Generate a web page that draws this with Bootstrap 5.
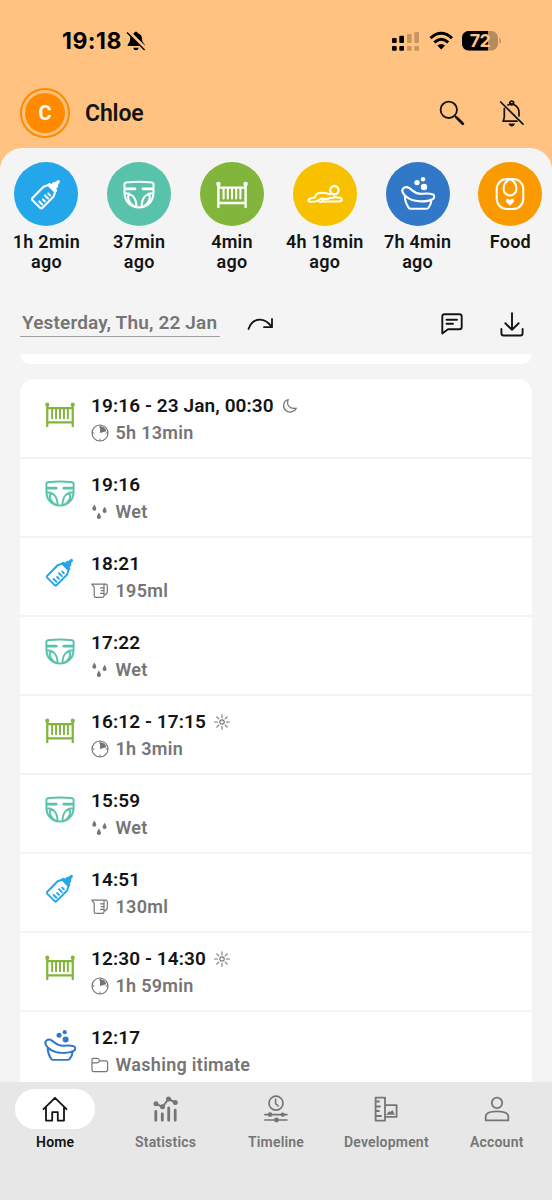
<!DOCTYPE html>
<html lang="en">
<head>
<meta charset="utf-8">
<meta name="viewport" content="width=device-width, initial-scale=1">
<title>Chloe</title>
<link href="https://cdn.jsdelivr.net/npm/bootstrap@5.3.0/dist/css/bootstrap.min.css" rel="stylesheet">
<style>
body{font-family:Roboto,sans-serif;background:#ffc280;color:#141414;-webkit-font-smoothing:antialiased}
svg{display:block;flex:none}
svg,symbol{overflow:visible}
.ln{fill:none;stroke:currentColor;stroke-linecap:round;stroke-linejoin:round}
.fl{fill:currentColor;stroke:none}
.phone{width:552px;height:1200px}
.statusbar{height:82px;padding:0 51px 0 62px;color:#000}
.clock{font:700 23px/26px Inter,sans-serif;letter-spacing:.5px}
.person{height:66px;padding:0 27px 4px 20px}
.avatar{width:50px;height:50px;border:2px solid #ff8a00;border-radius:50%;padding:3px}
.avatar span{background:#ff8a00;color:#fff;border-radius:50%;font-weight:700;font-size:20px}
.pname{font-size:23px;font-weight:600;margin-left:15px;padding-top:3px;letter-spacing:-.15px}
.sheet{background:#f4f4f4;border-radius:22px 22px 0 0;min-height:0}
.shortcuts{padding-top:14px;height:130px;width:557px}
.shortcut{width:92.8px;font-weight:600;font-size:18px;line-height:20px;letter-spacing:.25px}
.disc{width:64px;height:64px;border-radius:50%;color:#fff;margin-bottom:6px}
.datebar{height:76px;padding:26px 28px 0 20px}
.date{width:200px;height:33px;border-bottom:1.5px solid #a0a0a0;color:#757575;font-size:19px;font-weight:600;line-height:37px;padding-left:2px;letter-spacing:.15px;white-space:nowrap}
.feed{padding:0 20px;min-height:0}
.stub{height:10px;background:#fff;border-radius:0 0 12px 12px;margin-bottom:15px}
.log{border-radius:14px 14px 0 0;background:#fff;padding-top:1px}
.entry{height:79px;border-bottom:2px solid #f4f4f4;padding:14px 0 0 25px}
.entry>svg{margin-top:5px}
.entry-text{margin-left:16px}
.when{font-size:19px;font-weight:600;line-height:24px;gap:8px;letter-spacing:.1px}
.what{font-size:18px;font-weight:600;line-height:24px;color:#757575;gap:6.5px;margin-top:3px;letter-spacing:.3px}
.tabs{height:118px;background:#e7e7e7;padding-top:7px}
.tab{width:20%;color:#757575;font-size:14px;font-weight:600;line-height:18px;letter-spacing:.2px}
.pill{width:80px;height:40px;border-radius:20px;margin-bottom:4px}
.tab.on{color:#141414}.tab.on .pill{background:#fff}
.blue{color:#24a7ea}.mint{color:#59c2aa}.green{color:#82b53b}.navy{color:#3178c9}
</style>
</head>
<body>
<svg width="0" height="0" class="position-absolute" aria-hidden="true">
<symbol id="bottle" viewBox="0 0 32 32"><path class="ln" stroke-width="2.1" d="M18.5 7 13.5 8.8 2.2 20.2Q1.6 21.2 2.3 22L10.3 30Q11.3 30.8 12.3 30L23.6 18.6 25.3 13.4M9.2 23.4l3 3M13 21.4l1.8 1.8M15 17.4l3 3M18.3 15.6l1.8 1.8"/><path class="fl" d="M17.8 5.8q1.7-1.5 3.2-.1l.6.4q.8-2.4 3.4-2.2 1.2-.3 1.9-1.2 1-1.3 2.2-.5 1.6 1.2.3 2.7-1.3.8-1.3 2 .5 2.7-1.8 3.7l.3.5q1.2 1.6-.4 3.1l-1.6.6-7.4-7.4z"/></symbol>
<symbol id="diaper" viewBox="0 0 32 32"><path class="ln" stroke-width="2.1" d="M1.5 5.8Q1.7 4.7 3 4.5 16 3 29 4.5 30.3 4.7 30.5 5.8V14C30.5 23.5 24.5 29.4 16 29.4S1.5 23.5 1.5 14ZM1.8 15.2C9 15.2 13.4 20 13.4 29M30.2 15.2C23 15.2 18.6 20 18.6 29M5.8 15.6C3.8 21 6.5 25.6 11.6 28.6M26.2 15.6C28.2 21 25.5 25.6 20.4 28.6"/><path class="ln" stroke-width="2.8" stroke-linecap="butt" d="M2.5 10.8H12M20 10.8H29.5"/></symbol>
<symbol id="crib" viewBox="0 0 32 32"><path class="ln" stroke-width="2.4" d="M2.4 6.5V29M29.6 6.5V29M3 9.6H29M3 25H29"/><path class="ln" stroke-width="2.1" d="M7.6 10v10.5M11.8 10v10.5M16 10v10.5M20.2 10v10.5M24.4 10v10.5"/><circle class="fl" cx="2.4" cy="6" r="2.2"/><circle class="fl" cx="29.6" cy="6" r="2.2"/></symbol>
<symbol id="tummy" viewBox="0 0 38 32"><circle class="ln" stroke-width="2.3" cx="28.4" cy="12.2" r="4.2"/><path class="ln" stroke-width="2" d="M24.3 16.3Q17 14 12 15.3 10 16 9 19.3L4 20.6Q1.3 22 3 23.6 8 24.3 11.5 22.8L15 20.5 17.5 23.6H33.5Q37 23 35.4 20.4 34.4 19.4 31 19.5L28 18.9M11.5 22.8Q14 24.8 18 23.6M15.5 20.2Q21 22 24.3 19.8L27 20"/></symbol>
<symbol id="bath" viewBox="0 0 36 32"><path class="ln" stroke-width="2.1" d="M3.3 15.4C.4 11 5 7.4 9.4 10.2 13 12.6 15 16.4 22 15.8 26 15.4 29 15 33 16.4 34.6 17.2 34.8 20.4 32.6 21.2 27 24.2 15 24.2 8.7 20.4 5.8 18.6 4.2 17 3.3 15.4ZM4.8 17.5C4.8 22 6.4 26.4 8.6 29.8Q9.2 30.8 11 30.8H26Q27.6 30.8 28.4 29.8 31.2 26 31.5 22"/><circle class="fl" cx="17" cy="4.6" r="2.7"/><circle class="fl" cx="23" cy="1.2" r="2.2"/><circle class="fl" cx="24" cy="9" r="3.2"/></symbol>
<symbol id="bib" viewBox="0 0 32 34"><rect class="ln" stroke-width="2" x="2.7" y="2" width="26.6" height="30" rx="10"/><path class="ln" stroke-width="2" d="M16 2.3C11.5 4 9.6 8 9.6 12a6.4 6.4 0 0 0 12.8 0C22.4 8 20.5 4 16 2.3Z"/><path class="fl" d="M16 28.8 12.3 25Q11.2 22.5 13.3 21.7 15 21.3 16 23.2 17 21.3 18.7 21.7 20.8 22.5 19.7 25Z"/></symbol>
<symbol id="pie" viewBox="0 0 18 18"><circle class="ln" stroke-width="1.2" cx="9" cy="9" r="8"/><path class="fl" d="M9 9V2.2A6.8 6.8 0 0 1 15.4 7.2Z"/><path class="ln" stroke-width="1" d="M1.5 9H3M9 15v1.6M15 9h1.6M9 1.5v2"/></symbol>
<symbol id="drops" viewBox="0 0 18 18"><path class="fl" d="M3.3 1.5Q5.4 4.6 5.3 5.8a2 2 0 0 1-4 0Q1.3 4.6 3.3 1.5ZM13.6 3.7Q15.6 6.8 15.6 8a2 2 0 0 1-4 0Q11.6 6.8 13.6 3.7ZM7.9 9.6Q10 12.8 10 14a2.1 2.1 0 0 1-4.2 0Q5.8 12.8 7.9 9.6Z"/></symbol>
<symbol id="jug" viewBox="0 0 18 18"><path class="ln" stroke-width="1.2" d="M.8 2.2H13V13.7Q13 15.4 11.3 15.4H5Q3.2 15.4 3.2 13.7V5.2ZM13 2.2h1.8Q16.3 2.2 16.3 4V9.5Q16.3 12 13.4 13M9.5 5.8H12M10.3 8.6H12M9.5 11.4H12"/></symbol>
<symbol id="dir" viewBox="0 0 18 18"><path class="ln" stroke-width="1.2" d="M1 13.6V4Q1 2.3 2.6 2.3H6.6Q7.8 2.3 8.4 4.8H14.8Q16.6 4.8 16.6 6.5V13.6Q16.6 15.7 14.8 15.7H2.8Q1 15.7 1 13.6ZM1 6.8H6Q8 6.8 8.4 4.8"/></symbol>
<symbol id="moon" viewBox="0 0 16 16"><path class="ln" stroke-width="1.2" d="M6.3 1.6C1 3 .3 9.3 3.6 12.3 7 15.4 12.6 14.2 14.4 10.2 7.5 11.5 4 7 6.3 1.6Z"/></symbol>
<symbol id="sun" viewBox="0 0 16 16"><circle class="ln" stroke-width="1.2" cx="8" cy="8" r="2.2"/><path class="ln" stroke-width="1.1" d="M8 .8v3M8 12.2v3M.6 8h3M12.4 8h3M2.8 2.8l2 2M11.2 11.2l2 2M2.8 13.2l2-2M11.2 4.8l2-2"/></symbol>
</svg>

<div class="phone d-flex flex-column overflow-hidden">
  <header>
    <div class="statusbar d-flex align-items-center">
      <span class="clock">19:18</span>
      <svg class="ms-1" width="20" height="20" viewBox="0 0 20 20"><path class="fl" d="M10 .8C11 .8 11.7 1.4 11.8 2.2 15 3 16 5.3 16.2 9 16.3 12 19 12.6 19 15H1.5C1.5 12.8 3.8 12 4 9 4.2 5.3 5.2 3 8.2 2.2 8.3 1.4 9 .8 10 .8ZM7.2 16.8h5.6Q12.3 19.3 10 19.3T7.2 16.8Z"/><path d="M2.2.5 20 18" stroke="#ffc280" stroke-width="3.4"/><path d="M1 1.5 18.6 19" stroke="#000" stroke-width="1.4"/></svg>
      <svg class="ms-auto" width="28" height="20" viewBox="0 0 28 20"><g class="fl"><rect y="7" width="4.7" height="5" rx="1"/><rect x="7.3" y="4.8" width="4.7" height="7.2" rx="1"/><rect y="15" width="4.7" height="4.8" rx="1"/><rect x="7.3" y="15" width="4.7" height="4.8" rx="1"/><g opacity=".22"><rect x="15" y="3" width="4.7" height="9" rx="1"/><rect x="22.3" y="1" width="4.7" height="11" rx="1"/><rect x="15" y="15" width="4.7" height="4.8" rx="1"/><rect x="22.3" y="15" width="4.7" height="4.8" rx="1"/></g></g></svg>
      <svg style="margin-left:9px" width="25" height="20" viewBox="0 0 25 20"><path fill="none" stroke="#000" stroke-width="3" d="M1.5 7.2Q12.2-2.6 23 7.2M5.3 11.4Q12.2 5 19.2 11.4"/><path class="fl" d="M12.2 18.5 8.3 14.6Q12.2 11.4 16.2 14.6Z"/></svg>
      <svg style="margin-left:8px" width="39" height="20" viewBox="0 0 39 20"><clipPath id="cap"><rect width="36" height="19.5" rx="6.5"/></clipPath><g clip-path="url(#cap)"><rect width="36" height="20" fill="#b58c5f"/><rect width="26" height="20"/></g><path fill="#b58c5f" d="M37.3 6.8q1.7.8 1.7 3t-1.7 3z"/><text x="18" y="16.2" text-anchor="middle" font-family="Inter,sans-serif" font-weight="700" font-size="18" letter-spacing="-.6" fill="#ffc280">72</text></svg>
    </div>
    <div class="person d-flex align-items-center">
      <div class="avatar d-flex"><span class="d-flex flex-fill align-items-center justify-content-center">C</span></div>
      <span class="pname">Chloe</span>
      <svg class="ms-auto" width="26" height="26" viewBox="0 0 26 26"><circle class="ln" stroke-width="1.8" cx="9.8" cy="9.8" r="8.2"/><path class="ln" stroke-width="1.6" d="m15.5 15.5 2 2"/><path class="ln" stroke-width="2.8" d="m17.5 17.5 6.3 6.3"/></svg>
      <svg style="margin-left:34px" width="26" height="28" viewBox="0 0 26 28"><path class="ln" stroke-width="1.7" d="M1.7 3 24 25.2M5.3 9.5V17.5Q5.2 20.5 4 22.2H18M9 6Q12.5 3.8 16 6.2 20 8.5 20 13.5V17"/><circle class="ln" stroke-width="1.8" cx="12.7" cy="4" r="1.9"/><path class="fl" d="M9.5 24.6h6.4q-.6 2.8-3.2 2.8t-3.2-2.8Z"/></svg>
    </div>
  </header>

  <main class="sheet flex-fill d-flex flex-column overflow-hidden">
    <div class="shortcuts d-flex flex-shrink-0 text-center">
      <div class="shortcut"><div class="disc d-flex align-items-center justify-content-center mx-auto" style="background:#24a7ea"><svg width="32" height="32"><use href="#bottle"/></svg></div>1h 2min<br>ago</div>
      <div class="shortcut"><div class="disc d-flex align-items-center justify-content-center mx-auto" style="background:#59c2aa"><svg width="32" height="32"><use href="#diaper"/></svg></div>37min<br>ago</div>
      <div class="shortcut"><div class="disc d-flex align-items-center justify-content-center mx-auto" style="background:#82b53b"><svg width="32" height="32"><use href="#crib"/></svg></div>4min<br>ago</div>
      <div class="shortcut"><div class="disc d-flex align-items-center justify-content-center mx-auto" style="background:#f8c100"><svg width="38" height="32"><use href="#tummy"/></svg></div>4h 18min<br>ago</div>
      <div class="shortcut"><div class="disc d-flex align-items-center justify-content-center mx-auto" style="background:#3178c9"><svg width="36" height="32"><use href="#bath"/></svg></div>7h 4min<br>ago</div>
      <div class="shortcut"><div class="disc d-flex align-items-center justify-content-center mx-auto" style="background:#f99b00"><svg width="32" height="34"><use href="#bib"/></svg></div>Food</div>
    </div>
    <div class="datebar d-flex flex-shrink-0">
      <div class="date">Yesterday, Thu, 22 Jan</div>
      <svg style="margin:13px 0 0 27px" width="26" height="14" viewBox="0 0 26 14"><path class="ln" stroke-width="1.8" stroke-linejoin="miter" stroke-linecap="butt" d="M1.5 12C4 5 9 2.6 13 2.6 18 2.6 21 5 24 9M25 2V10.2H17"/></svg>
      <svg class="ms-auto" style="margin-top:9px" width="22" height="22" viewBox="0 0 22 22"><path class="ln" stroke-width="1.9" d="M1.3 20.5V3.5Q1.3 1.2 3.5 1.2H18.5Q20.7 1.2 20.7 3.5V14Q20.7 16.3 18.5 16.3H7ZM5.5 6.8H16M5.5 10.8H12"/></svg>
      <svg style="margin:8px 0 0 37px" width="24" height="26" viewBox="0 0 24 26"><path class="ln" stroke-width="1.9" d="M12 1.2V17.5M5.3 11.2 12 17.8 18.7 11.2M1.4 17V21.2Q1.4 23.5 3.7 23.5H20.3Q22.6 23.5 22.6 21.2V17"/></svg>
    </div>
    <div class="feed flex-fill overflow-hidden">
      <div class="stub"></div>
      <div class="log">
        <div class="entry d-flex"><svg class="green" width="30" height="30"><use href="#crib"/></svg><div class="entry-text"><div class="when d-flex align-items-center">19:16 - 23 Jan, 00:30 <svg width="16" height="16" color="#757575"><use href="#moon"/></svg></div><div class="what d-flex align-items-center"><svg width="18" height="18"><use href="#pie"/></svg>5h 13min</div></div></div>
        <div class="entry d-flex"><svg class="mint" width="30" height="30"><use href="#diaper"/></svg><div class="entry-text"><div class="when">19:16</div><div class="what d-flex align-items-center"><svg width="18" height="18"><use href="#drops"/></svg>Wet</div></div></div>
        <div class="entry d-flex"><svg class="blue" width="30" height="30"><use href="#bottle"/></svg><div class="entry-text"><div class="when">18:21</div><div class="what d-flex align-items-center"><svg width="18" height="18"><use href="#jug"/></svg>195ml</div></div></div>
        <div class="entry d-flex"><svg class="mint" width="30" height="30"><use href="#diaper"/></svg><div class="entry-text"><div class="when">17:22</div><div class="what d-flex align-items-center"><svg width="18" height="18"><use href="#drops"/></svg>Wet</div></div></div>
        <div class="entry d-flex"><svg class="green" width="30" height="30"><use href="#crib"/></svg><div class="entry-text"><div class="when d-flex align-items-center">16:12 - 17:15 <svg width="16" height="16" color="#757575"><use href="#sun"/></svg></div><div class="what d-flex align-items-center"><svg width="18" height="18"><use href="#pie"/></svg>1h 3min</div></div></div>
        <div class="entry d-flex"><svg class="mint" width="30" height="30"><use href="#diaper"/></svg><div class="entry-text"><div class="when">15:59</div><div class="what d-flex align-items-center"><svg width="18" height="18"><use href="#drops"/></svg>Wet</div></div></div>
        <div class="entry d-flex"><svg class="blue" width="30" height="30"><use href="#bottle"/></svg><div class="entry-text"><div class="when">14:51</div><div class="what d-flex align-items-center"><svg width="18" height="18"><use href="#jug"/></svg>130ml</div></div></div>
        <div class="entry d-flex"><svg class="green" width="30" height="30"><use href="#crib"/></svg><div class="entry-text"><div class="when d-flex align-items-center">12:30 - 14:30 <svg width="16" height="16" color="#757575"><use href="#sun"/></svg></div><div class="what d-flex align-items-center"><svg width="18" height="18"><use href="#pie"/></svg>1h 59min</div></div></div>
        <div class="entry d-flex"><svg class="navy" style="margin-left:-2px;margin-right:-2px" width="34" height="30"><use href="#bath"/></svg><div class="entry-text"><div class="when">12:17</div><div class="what d-flex align-items-center"><svg width="18" height="18"><use href="#dir"/></svg>Washing itimate</div></div></div>
      </div>
    </div>
  </main>

  <nav class="tabs d-flex flex-shrink-0 text-center">
    <div class="tab on"><div class="pill mx-auto d-flex align-items-center justify-content-center"><svg width="26" height="26" viewBox="0 0 26 26"><path class="ln" stroke-width="1.8" stroke-linejoin="miter" d="M1.5 13.2 13 1.8 24.5 13.2M4 11V24.6H10.2V16.2H15.8V24.6H22V11"/></svg></div>Home</div>
    <div class="tab"><div class="pill mx-auto d-flex align-items-center justify-content-center"><svg width="26" height="28" viewBox="0 0 26 28"><path class="ln" stroke-width="2" d="M3 8.8 9.5 11.8 15.5 4 22.3 7.5"/><g class="fl"><circle cx="3" cy="8.8" r="2.5"/><circle cx="9.5" cy="11.8" r="2.5"/><circle cx="15.5" cy="4" r="2.5"/><circle cx="22.3" cy="7.5" r="2.5"/></g><path class="ln" stroke-width="2.8" d="M2.8 16.5v8.8M9.3 19v6.3M15.7 13v12.3M22.2 15.2v10.1"/></svg></div>Statistics</div>
    <div class="tab"><div class="pill mx-auto d-flex align-items-center justify-content-center"><svg width="26" height="28" viewBox="0 0 26 28"><circle class="ln" stroke-width="1.7" cx="13" cy="8.2" r="7"/><path class="ln" stroke-width="1.6" d="M12.6 4.2V8.6L15.3 11M1.8 19.6H24M1.8 25H24"/><circle class="fl" cx="7" cy="19.6" r="2.4"/><circle class="fl" cx="19.7" cy="19.6" r="2.2"/><circle class="fl" cx="13.5" cy="25" r="2.4"/></svg></div>Timeline</div>
    <div class="tab"><div class="pill mx-auto d-flex align-items-center justify-content-center"><svg width="24" height="26" viewBox="0 0 24 26"><path class="ln" stroke-width="1.8" stroke-linejoin="miter" stroke-linecap="butt" d="M1.6 1.7H11V24.6H1.6ZM11 9.2H22.6V20.8H11M2 5.5H5M2 10.5H6M2 15H5M2 20H7"/><path class="fl" d="m12 18.8 3.2-3.5 1 .8 2.2-2 2.5 4.7z"/></svg></div>Development</div>
    <div class="tab"><div class="pill mx-auto d-flex align-items-center justify-content-center"><svg width="26" height="26" viewBox="0 0 26 26"><circle class="ln" stroke-width="1.8" cx="13" cy="6.9" r="5.2"/><path class="ln" stroke-width="1.8" d="M1.7 24.4V20.5C1.7 16.8 7 15.3 13 15.3S24.3 16.8 24.3 20.5V24.4Z"/></svg></div>Account</div>
  </nav>
</div>
<script src="https://cdn.jsdelivr.net/npm/bootstrap@5.3.0/dist/js/bootstrap.bundle.min.js"></script>
</body>
</html>
